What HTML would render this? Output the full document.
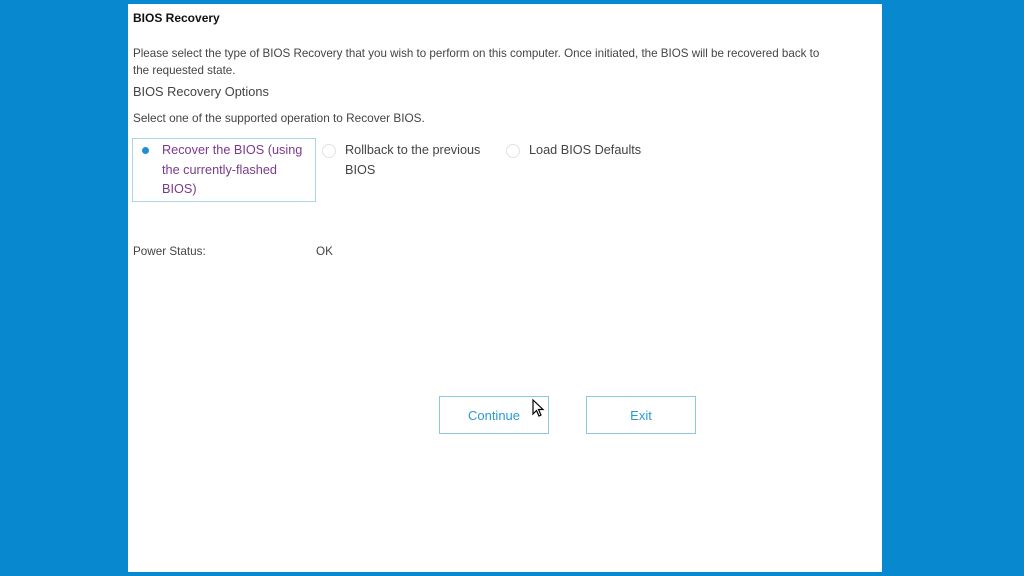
<!DOCTYPE html>
<html><head><style>
body{margin:0;width:1024px;height:576px;background:#0788cf;position:relative;overflow:hidden;font-family:"Liberation Sans",sans-serif;color:#333}
#p{position:absolute;left:128px;top:4px;width:754px;height:568px;background:#fff}
.t{position:absolute;white-space:nowrap}
.r{position:absolute;width:12px;height:12px;border:1px solid #e2e2e2;border-radius:50%}
.b{position:absolute;top:396px;width:108px;height:36px;border:1px solid #8cc8e4;color:#2a9ad6;font-size:13px;text-align:center;line-height:37px}
</style></head><body>
<div id="p"></div>
<div class="t" style="left:133px;top:11px;font-size:12px;font-weight:bold;color:#111">BIOS Recovery</div>
<div class="t" style="left:133px;top:45px;font-size:11.6px;line-height:17px;color:#444">Please select the type of BIOS Recovery that you wish to perform on this computer. Once initiated, the BIOS will be recovered back to<br>the requested state.</div>
<div class="t" style="left:133px;top:84px;font-size:12.8px;color:#444">BIOS Recovery Options</div>
<div class="t" style="left:133px;top:111px;font-size:11.8px;color:#444">Select one of the supported operation to Recover BIOS.</div>
<div style="position:absolute;left:132px;top:138px;width:182px;height:62px;border:1px solid #a9d4ea"></div>
<div style="position:absolute;left:142px;top:147px;width:7px;height:7px;border-radius:50%;background:#1e8fd6"></div>
<div class="t" style="left:162px;top:141px;font-size:12.7px;line-height:19.5px;color:#7a3a8c">Recover the BIOS (using<br>the currently-flashed<br>BIOS)</div>
<div class="r" style="left:322px;top:144px"></div>
<div class="t" style="left:345px;top:141px;font-size:12.7px;line-height:19.5px;color:#444">Rollback to the previous<br>BIOS</div>
<div class="r" style="left:506px;top:144px"></div>
<div class="t" style="left:529px;top:141px;font-size:12.7px;line-height:19.5px;color:#444">Load BIOS Defaults</div>
<div class="t" style="left:133px;top:245px;font-size:11.7px;color:#444">Power Status:</div>
<div class="t" style="left:316px;top:245px;font-size:11.7px;color:#444">OK</div>
<div class="b" style="left:439px">Continue</div>
<div class="b" style="left:586px">Exit</div>
<svg style="position:absolute;left:532px;top:399px" width="14" height="20" viewBox="0 0 14 20"><path d="M1 1 L1 15 L4.5 11.5 L7 17 L9 16 L6.5 10.5 L11 10.5 Z" fill="#fff" stroke="#000" stroke-width="1.2"/></svg>
</body></html>
